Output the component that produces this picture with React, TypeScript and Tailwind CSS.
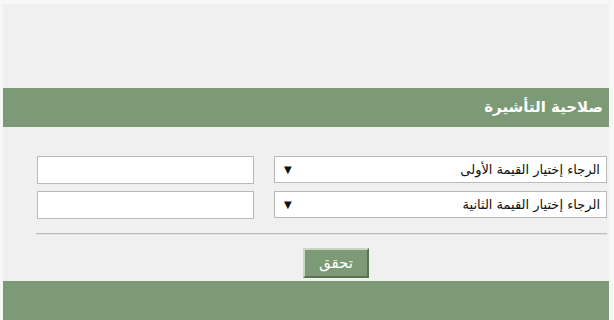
import React from "react";

const green = "bg-[#7b9a75]";

function FakeSelect({ label }: { label: string }) {
  return (
    <div className="flex h-[27px] w-[333px] items-center justify-between border border-[#b9b9b9] bg-white pr-[6px] pl-[9px]">
      <span className="text-[13px] text-[#111]">{label}</span>
      <span className="text-[10px] text-[#111]">▼</span>
    </div>
  );
}

function TextBox() {
  return <div className="h-[28px] w-[217px] border border-[#b9b9b9] bg-white" />;
}

export default function App() {
  return (
    <div
      className="h-[320px] w-[614px] overflow-hidden bg-[#f7f7f7]"
      style={{ fontFamily: '"DejaVu Sans", "Liberation Sans", sans-serif' }}
    >
      <div className="ml-[3px] mt-[4px] h-[316px] w-[606px] bg-[#f0f0f0]">
        <div className="h-[84px]" />
        <div dir="rtl" className={`flex h-[39px] items-center ${green} pr-[6px]`}>
          <h1 className="text-[15px] font-bold text-white">صلاحية التأشيرة</h1>
        </div>

        <div dir="rtl" className="flex flex-col gap-[7px] pt-[29px] pr-[2px]">
          <div className="flex items-start gap-[20px]">
            <FakeSelect label="الرجاء إختيار القيمة الأولى" />
            <TextBox />
          </div>
          <div className="flex items-start gap-[20px]">
            <FakeSelect label="الرجاء إختيار القيمة الثانية" />
            <TextBox />
          </div>
        </div>

        <div className="ml-[33px] mr-[2px] mt-[14px] h-[2px] border-t border-[#bdbdbd] bg-[#e2e2e2]" />

        <div className="flex pt-[13px] pl-[300px]">
          <button
            type="button"
            className={`h-[30px] w-[66px] border-2 border-t-[#c9d6c5] border-l-[#c9d6c5] border-r-[#58734f] border-b-[#58734f] ${green} text-[15px] text-white`}
          >
            تحقق
          </button>
        </div>

        <div className={`mt-[3px] h-[40px] ${green}`} />
      </div>
    </div>
  );
}
